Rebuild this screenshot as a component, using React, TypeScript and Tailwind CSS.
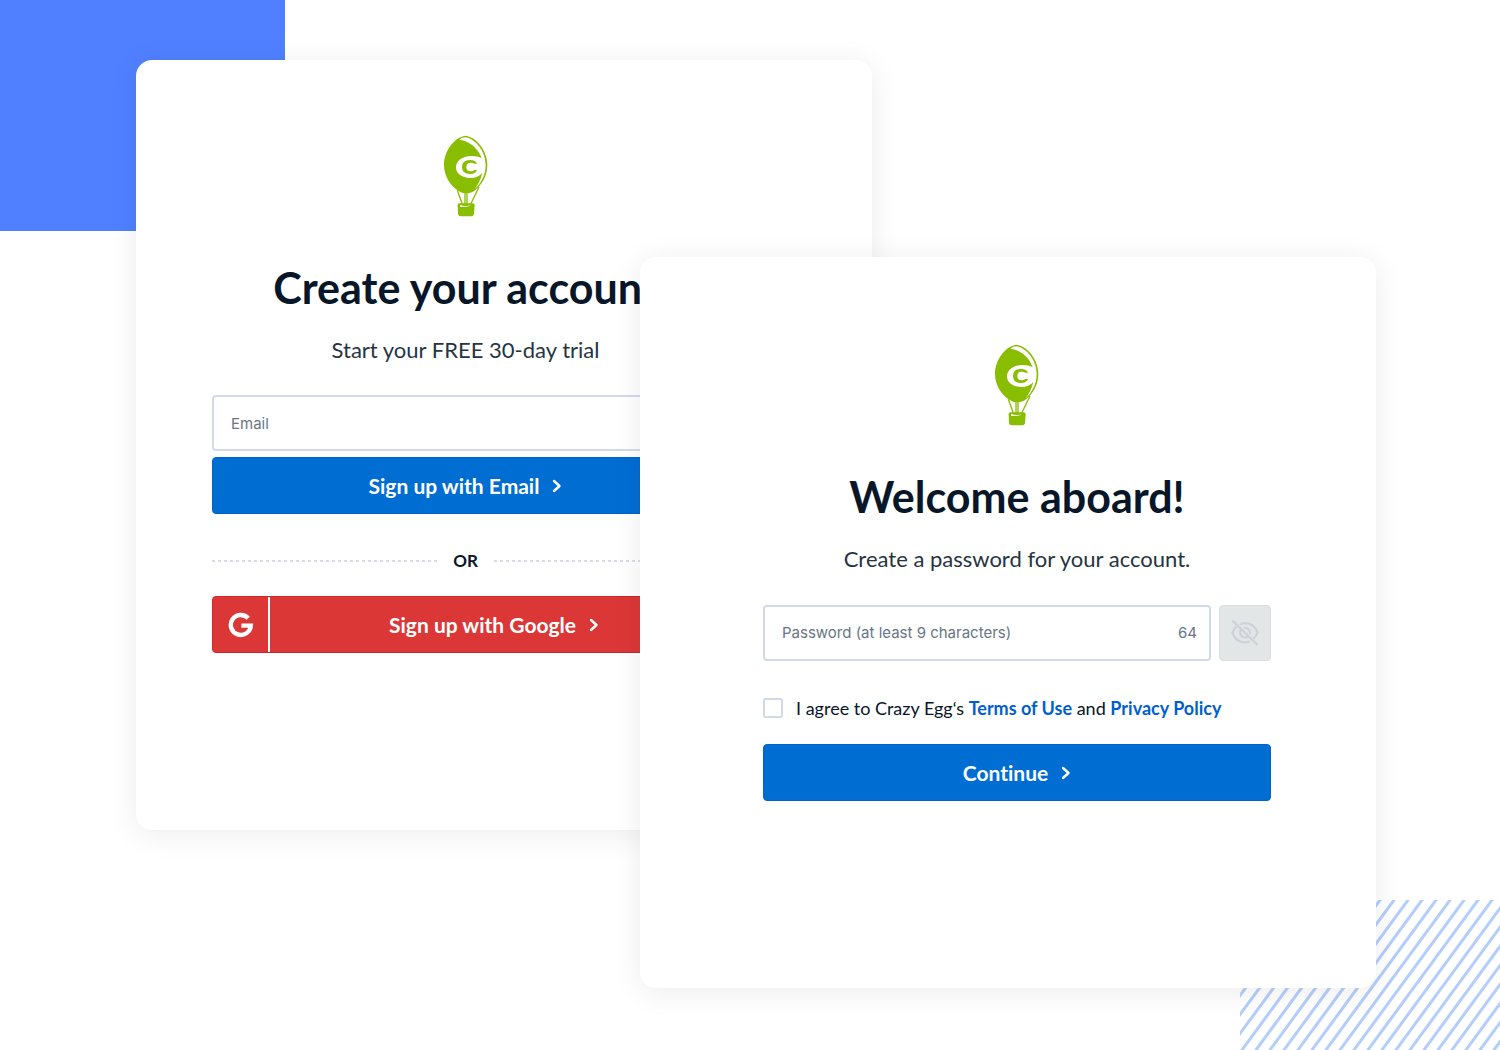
import React from "react";

const stripes = Array.from({ length: 28 }, (_, i) => 364 - i * 14);

function Balloon() {
  return (
    <svg viewBox="56 28 132 246" className="h-[82px] w-[44px]" role="img" aria-label="Crazy Egg">
      <path d="M120 30C158 36 186 78 186 118C186 152 168 182 143 198Q132 203 121 203Q110 203 100 196C74 180 56 150 56 118C56 78 84 36 120 30Z" fill="#88bd00" />
      <path d="M102 42Q110 35 120 35C152 40 181 78 181 118C181 148 168 172 147 192Q164 170 171 142Q158 157 135 157C108 157 92 143 92 125C92 106 110 91 138 91Q158 91 169 98C158 66 132 46 102 42Z" fill="#fff" />
      <path d="M155 114H147Q143 111 136 111Q123 111 123 124Q123 137 136 137Q143 137 147 133H155Q151 145 134 145Q110 145 110 124Q110 103 134 103Q151 103 155 114Z" fill="#88bd00" />
      <path d="M96 194L111 236M119 200V236M125 200V236M161 184L136 236" fill="none" stroke="#88bd00" strokeWidth="4" />
      <path d="M102 233H142Q148 233 148 239L146 265Q145 272 138 272H107Q99 272 98 265L97 239Q97 233 102 233Z" fill="#88bd00" />
      <path d="M104 238Q120 243 137 239Q129 245 104 244Z" fill="#fff" />
    </svg>
  );
}

function Chevron() {
  return (
    <svg viewBox="0 0 10 14" className="h-[14px] w-[10px]" fill="none" stroke="currentColor" strokeWidth="2.4" strokeLinecap="round" strokeLinejoin="round" aria-hidden="true">
      <path d="M2 2L7.5 7L2 12" />
    </svg>
  );
}

function GoogleMark() {
  return (
    <svg viewBox="0 0 26 26" className="size-[26px]" fill="none" stroke="currentColor" strokeWidth="4.4" aria-hidden="true">
      <path d="M20.2 6.2A10 10 0 1 0 22.8 13.6H13.4" />
    </svg>
  );
}

function EyeOff() {
  return (
    <svg viewBox="0 0 28 28" className="size-7" fill="none" stroke="currentColor" strokeWidth="2.2" aria-hidden="true">
      <path d="M9 5.4Q11.4 4.2 14 4.2C20 4.2 24.5 8 26.5 13.5Q25.2 17.2 22.5 19.8M18.6 22.4Q16.5 23.3 14 23.3C8 23.3 3.5 19.5 1.5 13.8Q2.8 10 5.5 7.4" />
      <path d="M10.4 10.1A5 5 0 0 0 17.3 17.3M13 8.9A5 5 0 0 1 18.9 14.9" />
      <path d="M1.5 1.5L26.5 26" />
    </svg>
  );
}

function Card({ className, children }: { className: string; children: React.ReactNode }) {
  return <section className={`rounded-2xl bg-white shadow-[0_4px_30px_rgba(0,0,0,0.08)] ${className}`}>{children}</section>;
}

function Intro({ title, text }: { title: string; text: string }) {
  return (
    <div className="flex flex-col items-center whitespace-nowrap">
      <Balloon />
      <h1 className="mt-[47px] text-[43px] leading-[48px] font-bold text-[#071628]">{title}</h1>
      <p className="mt-6 mb-px text-[22px] leading-7 text-[#263442]">{text}</p>
    </div>
  );
}

const primary = "flex h-[57px] w-full items-center justify-center gap-[13px] rounded-[4px] border border-[#0064cc] bg-[#006dd3] text-[21px] leading-6 font-bold text-white";

export default function App() {
  return (
    <main className="relative min-h-screen overflow-hidden bg-white font-['Lato',sans-serif] [font-variant-ligatures:none]">
      <div className="absolute top-0 left-0 h-[231px] w-[19%] bg-[#5080ff]" />
      <svg className="absolute right-0 bottom-0 h-[150px] w-[260px]" viewBox="0 0 260 150" stroke="#b4cefc" strokeWidth="3" aria-hidden="true">
        {stripes.map((x) => (
          <line key={x} x1={x + 3} y1="-4" x2={x - 113} y2="154" />
        ))}
      </svg>
      <div className="relative grid grid-cols-[136fr_504fr_232fr_504fr_124fr] items-start pt-[60px]">
        <Card className="col-start-2 col-span-2 row-start-1 pt-[75px] pr-[153px] pb-[177px] pl-[76px]">
          <Intro title="Create your account" text="Start your FREE 30-day trial" />
          <form className="mt-[30px]" onSubmit={(e) => e.preventDefault()}>
            <input aria-label="Email" type="email" placeholder="Email" className="block h-14 w-full rounded-[4px] border-2 border-[#d2daea] bg-white px-[17px] font-['Inter',sans-serif] text-[15px] placeholder:text-[#687585]" />
            <button className={`mt-[6px] ${primary}`}>
              Sign up with Email
              <Chevron />
            </button>
            <div className="mt-[35px] flex items-center gap-4 text-[17px] leading-6 font-bold text-[#071628]">
              <span className="h-[2px] flex-1 bg-[repeating-linear-gradient(90deg,#d9dce4_0_3px,transparent_3px_6px)]" />
              OR
              <span className="h-[2px] flex-1 bg-[repeating-linear-gradient(90deg,#d9dce4_0_3px,transparent_3px_6px)]" />
            </div>
            <button type="button" className="mt-[23px] flex h-[57px] w-full items-stretch rounded-[4px] border border-[#d32228] bg-[#dc3737] text-[21px] leading-6 font-bold text-white">
              <span className="flex w-[57px] items-center justify-center border-r-2 border-white">
                <GoogleMark />
              </span>
              <span className="flex flex-1 items-center justify-center gap-[13px]">
                Sign up with Google
                <Chevron />
              </span>
            </button>
          </form>
        </Card>
        <Card className="col-start-3 col-span-2 row-start-1 mt-[197px] pt-[87px] pr-[105px] pb-[187px] pl-[123px]">
          <Intro title="Welcome aboard!" text="Create a password for your account." />
          <form className="mt-[31px]" onSubmit={(e) => e.preventDefault()}>
            <div className="flex gap-2">
              <div className="flex h-14 flex-1 items-center rounded-[4px] border-2 border-[#d2daea] bg-white pr-3 pl-[17px] font-['Inter',sans-serif] text-[15px] text-[#687585]">
                <input aria-label="Password" type="password" placeholder="Password (at least 9 characters)" className="min-w-0 flex-1 outline-none placeholder:text-[#687585]" />
                <span>64</span>
              </div>
              <button type="button" aria-label="Show password" className="flex h-14 w-[52px] items-center justify-center rounded-[4px] border border-[#dadedf] bg-[#e3e6e6] text-[#cdd2d8]">
                <EyeOff />
              </button>
            </div>
            <div className="mt-[35px] flex items-center gap-[13px] text-[18px] leading-6 whitespace-nowrap text-[#071628]">
              <input id="agree" type="checkbox" className="size-5 appearance-none rounded-[2px] border-2 border-[#d2daea] bg-white checked:bg-[#006dd3]" />
              <label htmlFor="agree">
                I agree to Crazy Egg‘s <a href="#terms" className="font-bold text-[#005fd0]">Terms of Use</a> and <a href="#privacy" className="font-bold text-[#005fd0]">Privacy Policy</a>
              </label>
            </div>
            <button className={`mt-6 ${primary}`}>
              Continue
              <Chevron />
            </button>
          </form>
        </Card>
      </div>
    </main>
  );
}
